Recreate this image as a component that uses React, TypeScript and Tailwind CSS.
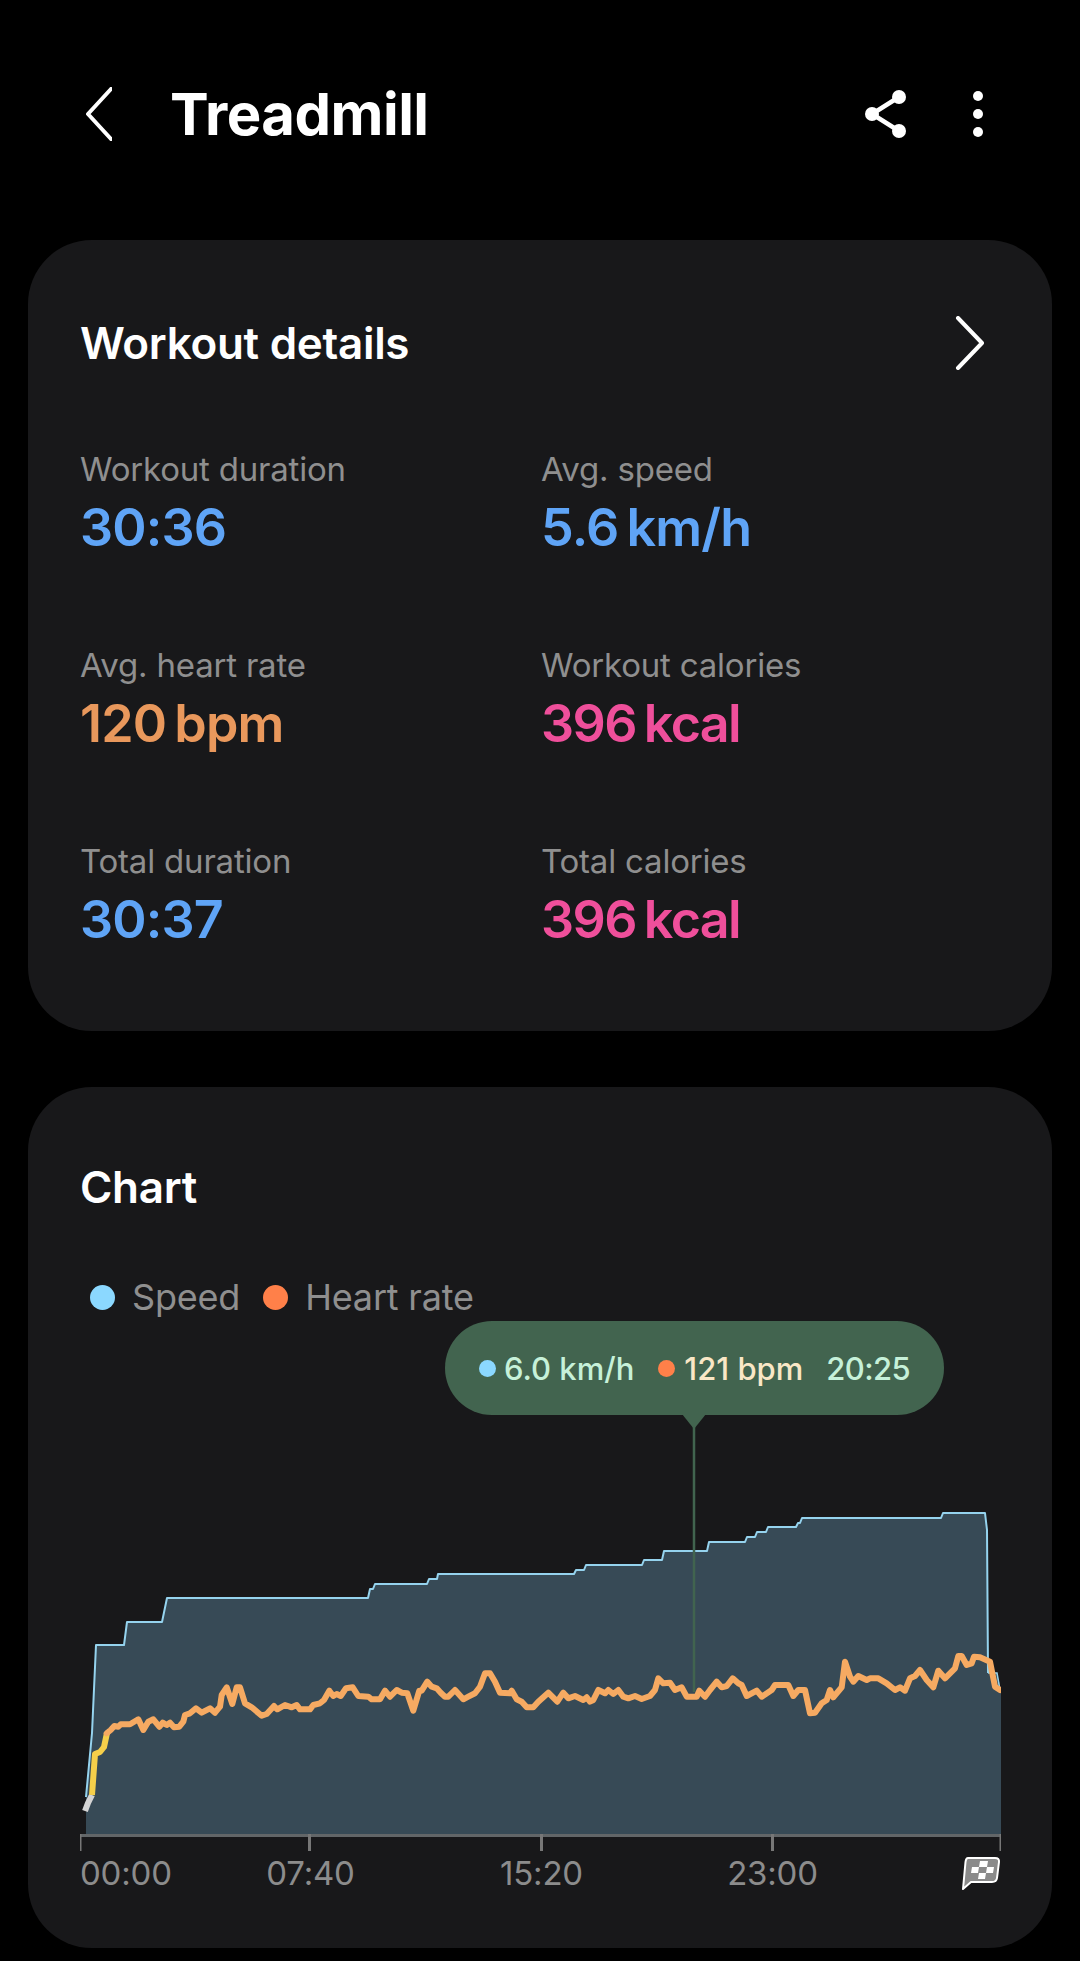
const font = { fontFamily: 'Inter, "Noto Sans", sans-serif' };

type Pt = [number, number];

// points were read off crops of the chart, so each run keeps its own origin
const crop = (ox: number, oy: number, pts: Pt[]) =>
  pts.map(([x, y]) => `${(ox + x / 3).toFixed(1)},${(oy + y / 3).toFixed(1)}`).join(' ');

const speedLine =
  '86,1797 92,1733 96,1645 124,1645 127,1622 162,1622 167,1598 368,1598 370,1589 373,1589 375,1584 427,1584 429,1579 437,1579 438,1574 574,1574 576,1570 584,1570 586,1565 642,1565 644,1560 662,1560 664,1551 707,1551 709,1542 745,1542 747,1537 755,1537 757,1532 766,1532 768,1527 796,1527 798,1523 800,1523 802,1518 941,1518 943,1513 985,1513 987,1530 988,1673';

const heartLeft: Pt[] = [
  [110, 340], [122, 330], [133, 318], [145, 320], [152, 313], [180, 313], [205, 298], [220, 330], [235, 305], [250, 298], [268, 320], [278, 308], [290, 315], [300, 308], [312, 322], [328, 320], [340, 305], [345, 285], [360, 280], [378, 265], [395, 278], [420, 265], [435, 278], [450, 260], [455, 225], [470, 202], [487, 252], [500, 202], [510, 202], [525, 250], [545, 262], [575, 287], [590, 282], [612, 258], [622, 268], [645, 255], [665, 262], [680, 255], [690, 268], [720, 268], [730, 255], [750, 250],
];
const heartMid: Pt[] = [
  [12, 240], [28, 212], [40, 228], [50, 222], [62, 228], [78, 205], [98, 202], [115, 228], [145, 230], [155, 238], [180, 238], [195, 212], [210, 230], [230, 210], [245, 218], [262, 220], [280, 272], [298, 212], [305, 212], [322, 185], [335, 200], [350, 205], [362, 218], [375, 230], [385, 230], [405, 210], [430, 238], [445, 230], [465, 220], [480, 200], [495, 160], [510, 160], [525, 185], [540, 218], [570, 220], [575, 212], [590, 238], [605, 245], [620, 262], [640, 262], [655, 245], [685, 218], [712, 245], [730, 218], [745, 235], [765, 228],
];
const heartRight: Pt[] = [
  [130, 300], [140, 292], [150, 305], [160, 300], [175, 270], [195, 280], [205, 270], [220, 282], [235, 270], [250, 290], [265, 295], [285, 288], [305, 297], [330, 288], [345, 270], [355, 235], [370, 250], [390, 248], [405, 270], [425, 262], [440, 290], [470, 290], [478, 272], [495, 290], [510, 270], [530, 245], [545, 262], [560, 258], [578, 235], [595, 250], [605, 255], [620, 288], [650, 272], [665, 290], [695, 270], [705, 255], [745, 255], [760, 288], [775, 270], [795, 270], [810, 340], [825, 338], [845, 310], [860, 300], [870, 270], [880, 292], [905, 262], [915, 185], [930, 230], [940, 245], [955, 228], [980, 240], [990, 235], [1015, 235], [1040, 250], [1065, 270], [1080, 262], [1095, 272], [1110, 235], [1125, 228], [1140, 210], [1160, 240], [1180, 262], [1195, 212], [1215, 235], [1245, 205], [1255, 168], [1265, 168], [1280, 195], [1295, 190], [1302, 170], [1320, 172], [1350, 185], [1365, 260], [1380, 270],
];

const heartLine = [crop(70, 1620, heartLeft), crop(320, 1620, heartMid), crop(540, 1600, heartRight)].join(' ');

const stats = [
  { label: 'Workout duration', value: '30:36', color: 'text-[#5fa4f6] tracking-[-0.8px]' },
  { label: 'Avg. speed', value: '5.6', unit: 'km/h', color: 'text-[#5fa4f6] tracking-[-0.8px]' },
  { label: 'Avg. heart rate', value: '120', unit: 'bpm', color: 'text-[#e9985c] tracking-[-0.8px]' },
  { label: 'Workout calories', value: '396', unit: 'kcal', color: 'text-[#ef4f9b] tracking-[-1.6px]' },
  { label: 'Total duration', value: '30:37', color: 'text-[#5fa4f6] tracking-[-0.8px]' },
  { label: 'Total calories', value: '396', unit: 'kcal', color: 'text-[#ef4f9b] tracking-[-1.6px]' },
];

function TopBar() {
  return (
    <div className="flex h-[240px] items-start pt-[68px] pl-[58px] pr-[69px]">
      <div className="flex h-[92px] w-full items-center">
        <svg width="26" height="54" viewBox="0 0 26 54" fill="none" stroke="white" strokeWidth="4" strokeLinecap="round" strokeLinejoin="round">
          <path d="M25 2 L2 27 L25 52" />
        </svg>
        <h1 className="ml-[58px] text-[58px] leading-none font-bold tracking-[-0.5px] text-white">Treadmill</h1>
        <div className="ml-auto flex items-center gap-[66px]">
          <svg width="42" height="48" viewBox="0 0 42 48" fill="white">
            <path d="M34 7 L7 24 L34 41" fill="none" stroke="white" strokeWidth="4.5" />
            <circle cx="34" cy="7" r="7" />
            <circle cx="7" cy="24" r="7" />
            <circle cx="34" cy="41" r="7" />
          </svg>
          <svg width="10" height="46" viewBox="0 0 10 46" fill="white">
            <circle cx="5" cy="5" r="5" />
            <circle cx="5" cy="23" r="5" />
            <circle cx="5" cy="41" r="5" />
          </svg>
        </div>
      </div>
    </div>
  );
}

function WorkoutDetails() {
  return (
    <section className="h-[791px] rounded-[64px] bg-[#18181a] px-[52px] pt-[73px]">
      <div className="flex h-[60px] items-center justify-between pr-[15px]">
        <h2 className="text-[44px] leading-none font-semibold tracking-[-0.3px] text-white">Workout details</h2>
        <svg width="30" height="54" viewBox="0 0 30 54" fill="none" stroke="white" strokeWidth="4" strokeLinecap="round" strokeLinejoin="round">
          <path d="M3 2 L27 27 L3 52" />
        </svg>
      </div>
      <div className="mt-[76px] grid grid-cols-[461px_1fr] gap-y-[84px]">
        {stats.map((s) => (
          <div key={s.label}>
            <div className="text-[33px] leading-[40px] tracking-[-0.2px] text-[#8f8f8f]">{s.label}</div>
            <div className={`mt-[6px] flex h-[66px] items-center gap-[8px] text-[52px] leading-none font-semibold ${s.color}`}>
              <span>{s.value}</span>
              {s.unit && <span>{s.unit}</span>}
            </div>
          </div>
        ))}
      </div>
    </section>
  );
}

function FinishFlag() {
  return (
    <svg width="40" height="36" viewBox="0 0 40 36" className="mt-[1px] mr-[-1px]">
      <path d="M7 2 H34 Q38.5 2 38 6 L36 22 Q35.5 26 31 26 H10 L2 33 L4.5 6 Q5 2 7 2 Z" fill="#8a8a8a" stroke="white" strokeWidth="2" strokeLinejoin="round" />
      <path d="M19 5 H27 L26 11 H18 Z M11 11 H18 L17 17 H10 Z M26 11 H33 L32 17 H25 Z M18 17 H25 L24 23 H17 Z" fill="white" />
    </svg>
  );
}

function Chart() {
  return (
    <section className="mt-[56px] h-[861px] rounded-[64px] bg-[#18181a] px-[52px] pt-[74px]">
      <h2 className="flex h-[52px] items-center text-[44px] leading-none font-semibold tracking-[-0.3px] text-white">Chart</h2>
      <div className="mt-[59px] flex h-[50px] items-center pl-[10px] text-[36px] text-[#8f8f8f]">
        <span className="size-[25px] rounded-full bg-[#8bd8ff]" />
        <span className="ml-[17px] tracking-[-0.2px]">Speed</span>
        <span className="ml-[23px] size-[25px] rounded-full bg-[#ff8049]" />
        <span className="ml-[17px] tracking-[-0.2px]">Heart rate</span>
      </div>

      <div className="relative">
        <svg width="921" height="531" viewBox="80 1322 921 531" className="block">
          <path d={`M86,1835 L${speedLine} 997,1673 1001,1690 L1001,1835 Z`} fill="#374a56" />
          <polyline points={speedLine} fill="none" stroke="#95d3ee" strokeWidth="2" strokeLinejoin="round" />
          <polyline points="988,1673 997,1673 1000,1690" fill="none" stroke="#95d3ee" strokeWidth="1.5" />
          <line x1="694" y1="1425" x2="694" y2="1692" stroke="#41644f" strokeWidth="2.5" />
          <polygon points="682,1414 706,1414 694,1429" fill="#42644f" />
          <polyline points="85,1811 88,1803 92,1795" fill="none" stroke="#d4d4d4" strokeWidth="6" strokeLinejoin="round" />
          <polyline points="92,1795 95,1754 100,1752 104,1747 107,1733" fill="none" stroke="#f5cf4a" strokeWidth="6" strokeLinejoin="round" />
          <polyline points={`107,1733 ${heartLine}`} fill="none" stroke="#f6aa62" strokeWidth="6" strokeLinejoin="round" strokeLinecap="round" />
          <rect x="80" y="1834" width="921" height="3" fill="#626668" />
          <rect x="79.5" y="1834" width="2" height="17" fill="#777" />
          <rect x="308" y="1834" width="3" height="17" fill="#777" />
          <rect x="540" y="1834" width="3" height="17" fill="#777" />
          <rect x="771" y="1834" width="3" height="17" fill="#777" />
          <rect x="999.5" y="1834" width="2" height="17" fill="#777" />
        </svg>

        {/* tooltip sits over the chart */}
        <div className="absolute top-[-1px] left-[365px] flex h-[94px] w-[499px] items-center rounded-full bg-[#42644f] pl-[34px] text-[31px] leading-none font-medium">
          <span className="size-[17px] rounded-full bg-[#8bd8ff]" />
          <span className="ml-[8px] text-[#c6f1d9]">6.0 km/h</span>
          <span className="ml-[24px] size-[17px] rounded-full bg-[#ff8049]" />
          <span className="ml-[9px] text-[#f9e7c6]">121 bpm</span>
          <span className="ml-[23px] tracking-[-0.6px] text-[#c6f1d9]">20:25</span>
        </div>
      </div>

      <div className="grid h-[40px] grid-cols-[115px_231px_231px_231px_1fr] items-center text-[33px] leading-none tracking-[-0.2px] text-[#8c8c8c]">
        <span>00:00</span>
        <span className="text-center">07:40</span>
        <span className="text-center">15:20</span>
        <span className="text-center">23:00</span>
        <span className="flex justify-end">
          <FinishFlag />
        </span>
      </div>
    </section>
  );
}

export default function App() {
  return (
    <div className="h-[1961px] w-[1080px] overflow-hidden bg-black px-[28px]" style={font}>
      <TopBar />
      <WorkoutDetails />
      <Chart />
    </div>
  );
}
